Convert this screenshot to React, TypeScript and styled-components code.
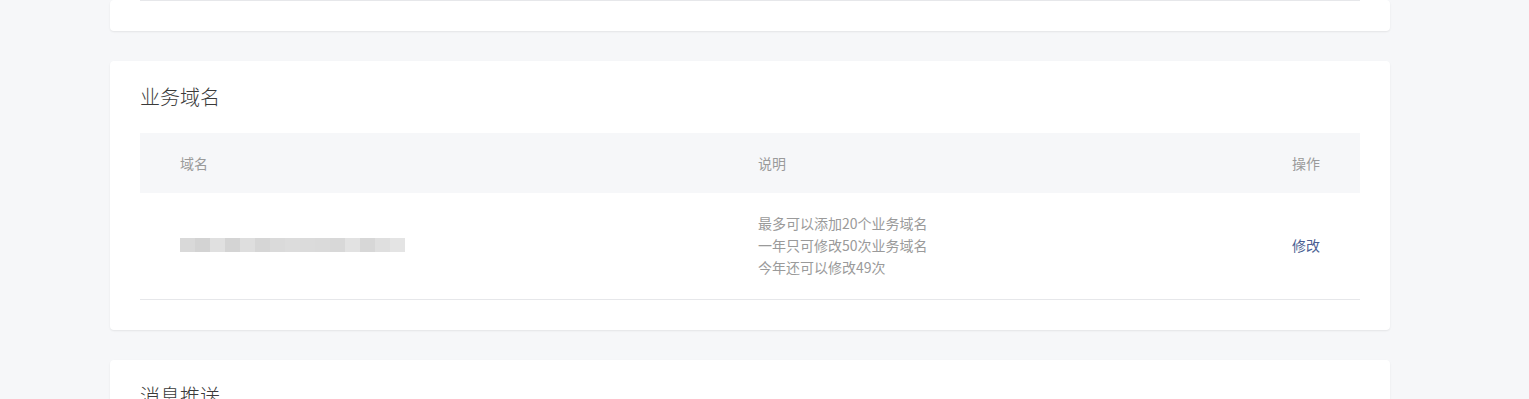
import React from "react";
import styled, { createGlobalStyle } from "styled-components";

const GlobalStyle = createGlobalStyle`
  html, body { margin: 0; padding: 0; background: #f6f7f9; }
  body { font-family: "Noto Sans CJK SC", "Noto Sans", sans-serif; overflow: hidden; }
`;

const Page = styled.div`
  width: 1280px;
  margin-left: 110px;
  display: flex;
  flex-direction: column;
  gap: 30px;
`;

const Card = styled.section<{ $tail?: boolean }>`
  background: #fff;
  border-radius: 4px;
  box-shadow: 0 1px 2px rgba(0, 0, 0, 0.08);
  padding: ${(p) => (p.$tail ? "0 30px 30px" : "22px 30px 30px")};
`;

const Divider = styled.div`
  height: 1px;
  background: #e6e7ea;
`;

const Title = styled.h2`
  margin: 0 0 22px;
  font-size: 20px;
  line-height: 28px;
  font-weight: 300;
  color: #3a3a3a;
`;

const Grid = styled.div<{ $head?: boolean }>`
  display: grid;
  grid-template-columns: 578px 1fr auto;
  align-items: center;
  padding: 0 40px;
  font-size: 14px;
  ${(p) =>
    p.$head
      ? `height: 60px; padding-bottom: 1px; box-sizing: border-box; background: #f6f7f9; color: #9a9a9a;`
      : `padding-top: 19px; padding-bottom: 21px; border-bottom: 1px solid #e6e7ea;`}
`;

const Desc = styled.div`
  color: #9a9a9a;
  line-height: 22px;
`;

const Link = styled.a`
  color: #4b5f93;
  text-decoration: none;
  cursor: pointer;
`;

const Blur = styled.div`
  display: flex;
  height: 14px;
  width: 225px;
`;

const Pixel = styled.span<{ $shade: string }>`
  flex: 1;
  background: ${(p) => p.$shade};
`;

const shades = [
  "#d9d9d9", "#d3d3d3", "#e0e0e0", "#d4d4d4", "#dedede",
  "#d6d6d6", "#dadada", "#dcdcdc", "#dbdbdb", "#dadada",
  "#d8d8d8", "#e2e2e2", "#d7d7d7", "#dfdfdf", "#e4e4e4",
];

export default function App() {
  return (
    <>
      <GlobalStyle />
      <Page>
        <Card $tail>
          <Divider />
        </Card>
        <Card>
          <Title>业务域名</Title>
          <Grid $head>
            <span>域名</span>
            <span>说明</span>
            <span>操作</span>
          </Grid>
          <Grid>
            <Blur>
              {shades.map((s, i) => (
                <Pixel key={i} $shade={s} />
              ))}
            </Blur>
            <Desc>
              最多可以添加20个业务域名
              <br />
              一年只可修改50次业务域名
              <br />
              今年还可以修改49次
            </Desc>
            <Link>修改</Link>
          </Grid>
        </Card>
        <Card>
          <Title>消息推送</Title>
        </Card>
      </Page>
    </>
  );
}
